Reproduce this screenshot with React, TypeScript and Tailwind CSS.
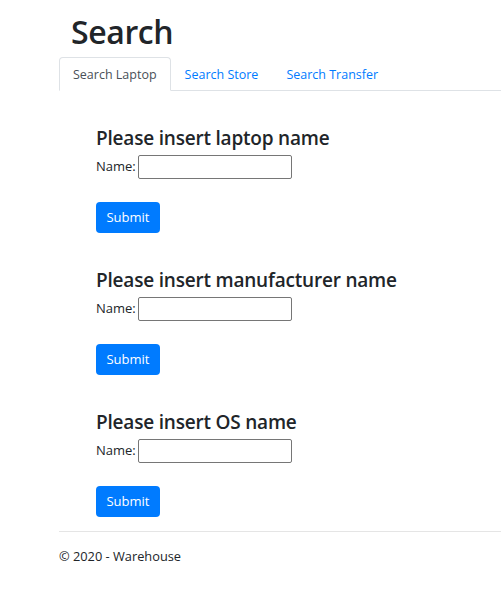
import React from 'react';

const sections = [
  'Please insert laptop name',
  'Please insert manufacturer name',
  'Please insert OS name',
];

const SearchForm: React.FC<{ title: string }> = ({ title }) => (
  <div className="mb-[33px]">
    <h4 className="pt-[2px] text-[19px] leading-[25px] font-semibold tracking-[-0.2px] text-[#212529] mb-[4px]">{title}</h4>
    <form onSubmit={(e) => e.preventDefault()}>
      <div className="flex items-center h-[24px]">
        <label className="text-[13px] text-[#212529] mr-[2px]">Name:</label>
        <input
          type="text"
          className="w-[154px] h-[24px] border border-[#767676] rounded-[2px] bg-white px-1 text-[13px]"
        />
      </div>
      <button
        type="submit"
        className="mt-[23px] h-[31px] w-[64px] rounded-[4px] bg-[#007bff] text-white text-[13px]"
      >
        Submit
      </button>
    </form>
  </div>
);

const App: React.FC = () => {
  const tabs = ['Search Laptop', 'Search Store', 'Search Transfer'];
  return (
    <div className="min-h-[613px] bg-white font-['Open_Sans',sans-serif] text-[#212529]">
      <div className="ml-[59px] pt-[11px]">
        <h1 className="pl-[12px] text-[32px] leading-[42px] font-semibold tracking-[-0.4px] mb-[4px]">Search</h1>
        <div className="flex h-[34px] border-b border-[#dee2e6]">
          {tabs.map((t, i) => (
            <div
              key={t}
              className={
                i === 0
                  ? 'h-[34px] px-[13px] pt-[2px] flex items-center text-[12.5px] text-[#495057] bg-white border border-[#dee2e6] border-b-white rounded-t-[4px]'
                  : 'h-[34px] px-[14px] pt-[2px] flex items-center text-[12.5px] text-[#007bff]'
              }
            >
              {t}
            </div>
          ))}
        </div>
        <div className="pl-[37px] pt-[33px]">
          {sections.map((s) => (
            <SearchForm key={s} title={s} />
          ))}
        </div>
        <footer className="-mt-[19px] border-t border-[#e5e5e5] pt-[15px] text-[12.8px] text-[#212529]">
          © 2020 - Warehouse
        </footer>
      </div>
    </div>
  );
};

export default App;
